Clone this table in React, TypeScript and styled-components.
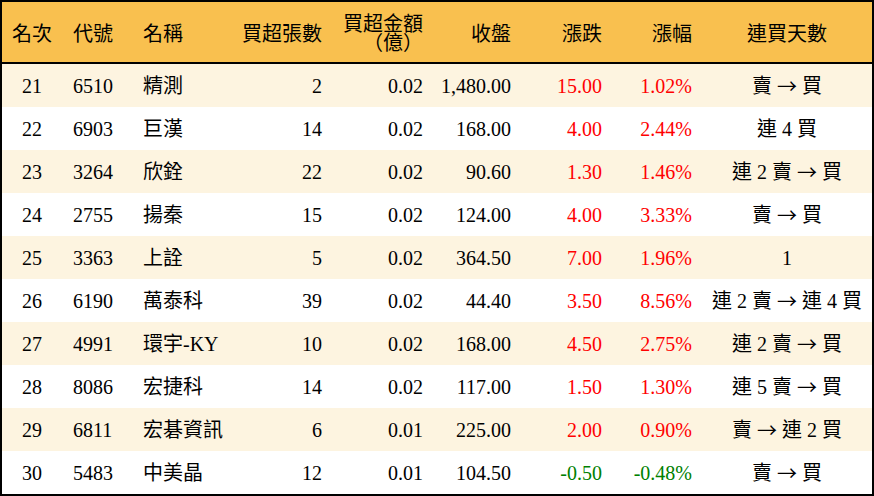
import React from "react";
import styled, { createGlobalStyle } from "styled-components";

const Global = createGlobalStyle`
  html, body { margin: 0; padding: 0; background: #fff; }
  body { font-family: "Liberation Serif", "Noto Sans CJK TC", serif; }
`;

const COLS = "60px 71px 97px 102px 101px 88px 91px 90px 170px";

type Align = "left" | "right" | "center";

const Table = styled.div`
  width: 874px;
  box-sizing: border-box;
  border: 2px solid #000;
  font-family: "Liberation Serif", "Noto Sans CJK TC", serif;
  font-size: 20px;
  color: #000;
`;

const HeaderRow = styled.div`
  display: grid;
  grid-template-columns: ${COLS};
  height: 60px;
  background: #f9c04f;
  border-bottom: 2px solid #000;
`;

const Row = styled.div<{ $striped: boolean }>`
  display: grid;
  grid-template-columns: ${COLS};
  height: 43px;
  background: ${(p) => (p.$striped ? "#fdf4e0" : "#ffffff")};
`;

const Cell = styled.div<{ $align: Align; $color?: string }>`
  display: flex;
  align-items: center;
  justify-content: ${(p) =>
    p.$align === "left" ? "flex-start" : p.$align === "right" ? "flex-end" : "center"};
  text-align: ${(p) => p.$align};
  padding: 0 10px;
  white-space: pre;
  line-height: 20px;
  color: ${(p) => p.$color || "#000"};
`;

const CodeCell = styled(Cell)`
  padding-left: 11px;
`;

const HeadCell = styled(Cell)`
  line-height: 19px;
  font-family: "Noto Sans CJK TC", sans-serif;
  text-spacing-trim: space-all;
`;

const HeadCodeCell = styled(HeadCell)`
  padding-left: 11px;
`;

const Arrow = styled.span`
  font-family: "Noto Sans CJK TC", sans-serif;
`;

type Item = {
  rank: number;
  code: string;
  name: string;
  vol: string;
  amt: string;
  close: string;
  chg: string;
  pct: string;
  streak: string;
};

const data: Item[] = [
  { rank: 21, code: "6510", name: "精測", vol: "2", amt: "0.02", close: "1,480.00", chg: "15.00", pct: "1.02%", streak: "賣 → 買" },
  { rank: 22, code: "6903", name: "巨漢", vol: "14", amt: "0.02", close: "168.00", chg: "4.00", pct: "2.44%", streak: "連 4 買" },
  { rank: 23, code: "3264", name: "欣銓", vol: "22", amt: "0.02", close: "90.60", chg: "1.30", pct: "1.46%", streak: "連 2 賣 → 買" },
  { rank: 24, code: "2755", name: "揚秦", vol: "15", amt: "0.02", close: "124.00", chg: "4.00", pct: "3.33%", streak: "賣 → 買" },
  { rank: 25, code: "3363", name: "上詮", vol: "5", amt: "0.02", close: "364.50", chg: "7.00", pct: "1.96%", streak: "1" },
  { rank: 26, code: "6190", name: "萬泰科", vol: "39", amt: "0.02", close: "44.40", chg: "3.50", pct: "8.56%", streak: "連 2 賣 → 連 4 買" },
  { rank: 27, code: "4991", name: "環宇-KY", vol: "10", amt: "0.02", close: "168.00", chg: "4.50", pct: "2.75%", streak: "連 2 賣 → 買" },
  { rank: 28, code: "8086", name: "宏捷科", vol: "14", amt: "0.02", close: "117.00", chg: "1.50", pct: "1.30%", streak: "連 5 賣 → 買" },
  { rank: 29, code: "6811", name: "宏碁資訊", vol: "6", amt: "0.01", close: "225.00", chg: "2.00", pct: "0.90%", streak: "賣 → 連 2 買" },
  { rank: 30, code: "5483", name: "中美晶", vol: "12", amt: "0.01", close: "104.50", chg: "-0.50", pct: "-0.48%", streak: "賣 → 買" },
];

const colorFor = (v: string) => (v.startsWith("-") ? "#008000" : "#ff0000");

const Streak = ({ text }: { text: string }) => {
  const parts = text.split("→");
  return (
    <>
      {parts.map((p, i) => (
        <React.Fragment key={i}>
          {i > 0 && <Arrow>→</Arrow>}
          {p}
        </React.Fragment>
      ))}
    </>
  );
};

export default function App() {
  return (
    <>
      <Global />
      <Table>
        <HeaderRow>
          <HeadCell $align="center">名次</HeadCell>
          <HeadCodeCell $align="left">代號</HeadCodeCell>
          <HeadCell $align="left">名稱</HeadCell>
          <HeadCell $align="right">買超張數</HeadCell>
          <HeadCell $align="right">{"買超金額\n（億）"}</HeadCell>
          <HeadCell $align="right">收盤</HeadCell>
          <HeadCell $align="right">漲跌</HeadCell>
          <HeadCell $align="right">漲幅</HeadCell>
          <HeadCell $align="center">連買天數</HeadCell>
        </HeaderRow>
        {data.map((d, i) => (
          <Row key={d.rank} $striped={i % 2 === 0}>
            <Cell $align="center">{d.rank}</Cell>
            <CodeCell $align="left">{d.code}</CodeCell>
            <Cell $align="left">{d.name}</Cell>
            <Cell $align="right">{d.vol}</Cell>
            <Cell $align="right">{d.amt}</Cell>
            <Cell $align="right">{d.close}</Cell>
            <Cell $align="right" $color={colorFor(d.chg)}>{d.chg}</Cell>
            <Cell $align="right" $color={colorFor(d.pct)}>{d.pct}</Cell>
            <Cell $align="center">
              <Streak text={d.streak} />
            </Cell>
          </Row>
        ))}
      </Table>
    </>
  );
}
